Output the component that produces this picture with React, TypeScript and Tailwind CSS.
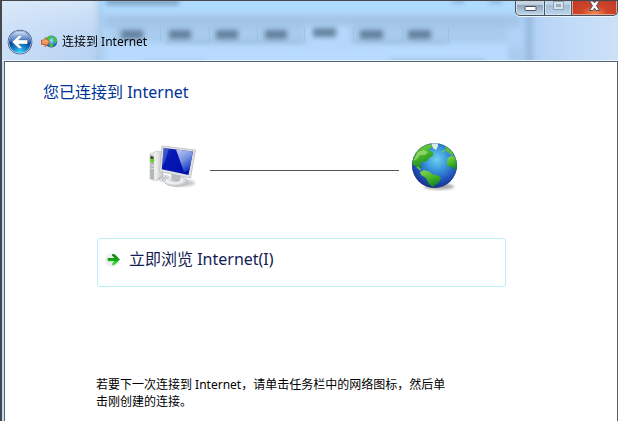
import type { ReactNode } from "react";

const backdropTabs = [
  { x: 121, width: 22 },
  { x: 169, width: 22 },
  { x: 216, width: 22 },
  { x: 265, width: 22 },
  { x: 313, width: 23 },
  { x: 360, width: 23 },
  { x: 408, width: 23 },
];

const tabDividers = [160, 209, 257, 304, 353, 402, 448];

function GlassBackdrop() {
  return (
    <svg className="absolute -left-0.5 top-0 h-[61px] w-[calc(100%+2px)]" aria-hidden="true">
      <defs>
        <linearGradient id="glass-left" x1="0" x2="1">
          <stop offset="0" stopColor="#d3e3f7" />
          <stop offset="0.5" stopColor="#c3d9f4" />
          <stop offset="1" stopColor="#b2d1f3" />
        </linearGradient>
        <linearGradient id="glass-shine" x1="0" x2="0" y1="0" y2="1">
          <stop offset="0" stopColor="#dcebfa" stopOpacity="0.8" />
          <stop offset="1" stopColor="#b9d4f5" stopOpacity="0.3" />
        </linearGradient>
        <linearGradient id="glass-right" gradientUnits="userSpaceOnUse" x1="528" x2="618" y1="0" y2="0">
          <stop offset="0" stopColor="#b1d1f4" />
          <stop offset="0.5" stopColor="#c1dbf7" />
          <stop offset="1" stopColor="#cde1f7" />
        </linearGradient>
        <filter id="haze" x="-20%" y="-50%" width="140%" height="200%">
          <feGaussianBlur stdDeviation="3" />
        </filter>
        <filter id="soft" x="-30%" y="-50%" width="160%" height="200%">
          <feGaussianBlur stdDeviation="2.4" />
        </filter>
      </defs>
      <rect width="100" height="61" fill="url(#glass-left)" />
      <rect width="100" height="61" fill="url(#glass-shine)" />
      <rect x="528" width="100%" height="61" fill="url(#glass-right)" />
      <rect x="99" width="430" height="61" fill="#b1d4f7" />
      <g filter="url(#haze)">
        <rect x="100" y="-8" width="426" height="20" fill="#afdbff" />
        <rect x="104" y="14" width="416" height="12" fill="#a2c4e6" />
        <rect x="112" y="26" width="396" height="15" fill="#a9cbed" />
        <rect x="108" y="44" width="400" height="20" fill="#b8dbff" />
        <rect x="306" y="25" width="44" height="25" fill="#b5d8fc" />
        <rect x="526" y="-6" width="6" height="75" fill="#91b4d9" />
        <rect x="97" y="-6" width="3" height="75" fill="#a0bddc" opacity="0.8" />
        <rect x="508" y="46" width="14" height="20" fill="#a9caec" />
      </g>
      <g filter="url(#soft)">
        <rect x="106" y="-2" width="73" height="6" fill="#7192b3" opacity="0.8" />
        <rect x="452" y="-2" width="12" height="4" fill="#6d8dac" opacity="0.6" />
        <rect x="489" y="-2" width="13" height="4" fill="#6d8dac" opacity="0.6" />
        {backdropTabs.map((tab) => (
          <rect
            key={tab.x}
            x={tab.x}
            y={tab.x === 313 ? 27 : 29}
            width={tab.width}
            height="9"
            fill="#48657f"
            opacity="0.72"
          />
        ))}
        <rect x="165" y="40" width="140" height="2" fill="#7f9dbc" opacity="0.6" />
        <rect x="354" y="40" width="94" height="2" fill="#7f9dbc" opacity="0.6" />
        <rect x="391" y="59" width="94" height="3" fill="#59738d" opacity="0.5" />
        <rect x="145" y="60" width="58" height="2" fill="#59738d" opacity="0.4" />
      </g>
      {tabDividers.map((x) => (
        <rect key={x} x={x} y="26" width="1" height="15" fill="#819fbc" opacity="0.25" />
      ))}
    </svg>
  );
}

function BackIcon() {
  return (
    <svg viewBox="0 0 26 26" className="size-[26px]" aria-hidden="true">
      <defs>
        <linearGradient id="back-top" x1="0" x2="0" y1="0" y2="1">
          <stop offset="0" stopColor="#dbe6f6" />
          <stop offset="0.4" stopColor="#86aadd" />
          <stop offset="1" stopColor="#2f62b2" />
        </linearGradient>
        <radialGradient id="back-bottom" cx="0.5" cy="1" r="0.75">
          <stop offset="0" stopColor="#35e3ff" />
          <stop offset="0.4" stopColor="#168bd4" />
          <stop offset="1" stopColor="#052b76" />
        </radialGradient>
      </defs>
      <circle cx="13" cy="13" r="12.3" fill="#3a5486" />
      <circle cx="13" cy="13" r="11.5" fill="#cfdef4" />
      <circle cx="13" cy="13" r="10.8" fill="url(#back-bottom)" />
      <path d="M2.2 13C2.2 6.8 7 2.2 13 2.2S23.8 6.8 23.8 13Q19 14.5 13 13.5T2.2 13Z" fill="url(#back-top)" />
      <path
        d="M5 13 L12 6.4 Q14.5 6 14.8 7.4 L11.7 10.9 H19.7 Q20.5 10.9 20.5 11.8 V14.2 Q20.5 15.1 19.7 15.1 H11.7 L14.8 18.6 Q14.5 20 12 19.6Z"
        fill="#fff"
        stroke="#45658d"
        strokeWidth="0.4"
      />
    </svg>
  );
}

function ConnectIcon() {
  return (
    <svg viewBox="0 0 17 14" className="h-[14px] w-[17px]" aria-hidden="true">
      <defs>
        <radialGradient id="mini-globe" cx="0.5" cy="0.4" r="0.6">
          <stop offset="0" stopColor="#9de3ff" />
          <stop offset="0.55" stopColor="#3292de" />
          <stop offset="1" stopColor="#174599" />
        </radialGradient>
      </defs>
      <circle cx="10.3" cy="6.5" r="6" fill="url(#mini-globe)" />
      <path d="M5 4.2 Q7 .6 10.3 .6 L10.8 3 8.6 4.5 8 7 5 6Z M12.3 1 Q15.8 2.8 16.2 6.5 L14.2 8.6 12.6 5.5Z M9 8.6 L12 9.2 12.6 10.6 10.5 12.4 8.6 11.6Z" fill="#4cc234" />
      <path d="M0.5 5 H4 V2.6 L8.9 7.2 4 11.8 V9.4 H0.5Z" fill="#f79150" stroke="#b9501f" strokeWidth="0.8" />
      <path d="M1.4 6 H4.8 V4.9 L7 7" fill="none" stroke="#ffc398" strokeWidth="0.7" />
    </svg>
  );
}

function ComputerIcon() {
  return (
    <svg viewBox="0 0 50 44" className="h-11 w-[50px]" aria-hidden="true">
      <defs>
        <linearGradient id="screen" x1="0" x2="1" y1="0" y2="0.5">
          <stop offset="0" stopColor="#1b3cc0" />
          <stop offset="0.35" stopColor="#0416b4" />
          <stop offset="1" stopColor="#0210a8" />
        </linearGradient>
        <linearGradient id="screen-shine" x1="0" x2="0.5" y1="0" y2="1">
          <stop offset="0" stopColor="#eaf4ff" />
          <stop offset="0.55" stopColor="#8eaeed" />
          <stop offset="1" stopColor="#1c43cb" />
        </linearGradient>
        <linearGradient id="tower" x1="0" x2="1">
          <stop offset="0" stopColor="#c9cccd" />
          <stop offset="0.4" stopColor="#f0f1f1" />
          <stop offset="1" stopColor="#c4c7c9" />
        </linearGradient>
        <radialGradient id="stand" cx="0.4" cy="0.35" r="0.65">
          <stop offset="0" stopColor="#c4c7c9" />
          <stop offset="0.5" stopColor="#f4f5f5" />
          <stop offset="1" stopColor="#bcbec0" />
        </radialGradient>
        <filter id="pc-shadow">
          <feGaussianBlur stdDeviation="1.2" />
        </filter>
      </defs>
      <ellipse cx="34" cy="38" rx="12" ry="3.5" fill="#777" opacity="0.4" filter="url(#pc-shadow)" />
      <path d="M1 9 L8 6 14 7 V32 L7 36 1 34Z" fill="url(#tower)" stroke="#c3c5c7" strokeWidth="0.6" />
      <path d="M1.2 10 L5 11 V35 L1.2 33.5Z" fill="#b3b7b8" />
      <path d="M1.5 11 L4.5 12 V15 L1.5 14Z" fill="#2d372a" />
      <circle cx="3.4" cy="15.5" r="1.9" fill="#5fd813" />
      <path d="M1.5 20 L5 21 M1.5 23 L5 24" stroke="#e2e5e6" strokeWidth="1" />
      <path d="M8 34 L14 30 20 31 14 37Z" fill="#e0e2e3" stroke="#b2b5b7" strokeWidth="0.5" />
      <path d="M10 34 L14 31.5 M13 35 L17 31.5 M16 35 L19 33" stroke="#868686" strokeWidth="0.7" />
      <ellipse cx="27" cy="36.5" rx="11.5" ry="5" fill="url(#stand)" stroke="#b0b3b4" strokeWidth="0.6" />
      <path d="M22 28 L32 30 31 36 Q27 38 23 35Z" fill="#b9bcbe" />
      <path d="M13 1 L46.5 5 41.5 33 10.5 26.5Z" fill="#e0e1e2" stroke="#b4b6b8" strokeWidth="0.7" />
      <path d="M14.6 3 L44 6.5 39.5 30 12.8 24.3Z" fill="url(#screen)" />
      <path d="M27 4.5 L43.8 6.5 40.5 25 35 27Z" fill="url(#screen-shine)" opacity="0.82" />
      <path d="M14.6 3 L20 3.7 15 18 13.3 20Z" fill="#688bd5" opacity="0.45" />
    </svg>
  );
}

function GlobeIcon() {
  return (
    <svg viewBox="0 0 48 50" className="h-[50px] w-12" aria-hidden="true">
      <defs>
        <radialGradient id="ocean" cx="0.55" cy="0.36" r="0.65">
          <stop offset="0" stopColor="#6fd0f0" />
          <stop offset="0.38" stopColor="#3a97da" />
          <stop offset="0.75" stopColor="#1f51bb" />
          <stop offset="1" stopColor="#17307f" />
        </radialGradient>
        <linearGradient id="land" x1="0" x2="0.4" y1="0" y2="1">
          <stop offset="0" stopColor="#8fd45c" />
          <stop offset="0.5" stopColor="#4dbb27" />
          <stop offset="1" stopColor="#178a22" />
        </linearGradient>
        <clipPath id="globe-edge">
          <circle cx="23.5" cy="23.5" r="22.5" />
        </clipPath>
        <filter id="globe-shadow">
          <feGaussianBlur stdDeviation="1.4" />
        </filter>
      </defs>
      <ellipse cx="28" cy="44.5" rx="15" ry="3" fill="#454545" opacity="0.5" filter="url(#globe-shadow)" />
      <circle cx="23.5" cy="23.5" r="22.5" fill="url(#ocean)" />
      <g clipPath="url(#globe-edge)">
        <path
          d="M3 11 Q9 3 17 2 L22 3 20 6 17 8 22 10 22 14 18 16 16 19 12 20 9 22 11 25 7 27 5 24 2 23 0 19Z"
          fill="url(#land)"
        />
        <path d="M20 1 L27 1 27 4 25 8 22 6Z" fill="#e0eee0" />
        <path d="M34 4 L38 5 43 11 41 14 38 11 35 9Z" fill="#5ec03c" />
        <path d="M36 17 L40 14 47 15 48 27 44 28 41 25 36 24Z" fill="url(#land)" />
        <path d="M9 30 L13 28 19 30 21 32 28 34 30 36 28 40 22 45 18 42 15 36 10 33Z" fill="url(#land)" />
        <path d="M7 10 L13 8 17 10 14 13 9 13 6 17 2 19Z" fill="#b9e08d" opacity="0.6" />
        <path d="M6 25 L10 28 M34 8 L31 10" stroke="#7ccc48" strokeWidth="1.4" fill="none" />
      </g>
      <circle cx="23.5" cy="23.5" r="22" fill="none" stroke="#18397d" strokeWidth="0.7" opacity="0.4" />
    </svg>
  );
}

function ArrowIcon() {
  return (
    <svg viewBox="0 0 16 16" className="size-4 shrink-0" aria-hidden="true">
      <defs>
        <linearGradient id="go" x1="0" x2="0" y1="0" y2="1">
          <stop offset="0" stopColor="#087707" />
          <stop offset="0.5" stopColor="#14a814" />
          <stop offset="1" stopColor="#39ed45" />
        </linearGradient>
      </defs>
      <circle cx="7" cy="9" r="7" fill="#efedf0" />
      <path
        d="M3 7 H9.5 L7 4.5 Q6.8 2.9 8.2 2.9 Q9.2 2.9 10 3.7 L15 8.6 10 13.5 Q9.2 14.3 8.2 14.3 Q6.8 14.3 7 12.7 L9.5 10.2 H3 Q2 8.6 3 7Z"
        fill="url(#go)"
      />
    </svg>
  );
}

type CaptionButtonProps = { label: string; className: string; children: ReactNode };

function CaptionButton({ label, className, children }: CaptionButtonProps) {
  return (
    <button type="button" aria-label={label} className={`flex h-full justify-center ${className}`}>
      {children}
    </button>
  );
}

function CaptionButtons() {
  return (
    <div className="absolute right-0 top-0 flex h-[15px] w-[103px] overflow-hidden rounded-b-[5px] border-x border-b border-[#46535f] bg-[#46535f] shadow-[0_1px_0_#ecf6ff]">
      <CaptionButton
        label="最小化"
        className="w-[28px] border-x border-b border-[#d2e1ee] bg-linear-to-b from-[#c3d3e2] from-25% via-[#8fa5ba] via-35% to-[#bcd2e7]"
      >
        <svg viewBox="0 0 13 13" className="h-[13px] w-[13px]">
          <rect x="1" y="5.5" width="11" height="4" rx="1" fill="#fff" stroke="#48505f" />
        </svg>
      </CaptionButton>
      <CaptionButton
        label="最大化"
        className="ml-px w-[26px] border-x border-b border-[#d3e4f3] bg-linear-to-b from-[#bfd4e8] from-25% via-[#a2bdd6] via-35% to-[#bad3eb]"
      >
        <svg viewBox="0 0 13 13" className="h-[13px] w-[13px]">
          <path d="M1.5 0.5 H11.5 V8.5 H1.5Z M4.5 3.5 V5.5 H8.5 V3.5Z" fill="#d6e1ec" fillRule="evenodd" stroke="#8ba0b3" />
        </svg>
      </CaptionButton>
      <CaptionButton
        label="关闭"
        className="ml-px flex-1 border-x border-b border-[#e9a18d] bg-[radial-gradient(ellipse_at_bottom,#f38c55_0%,#cd4529_45%,#c0392a_100%)]"
      >
        <svg viewBox="0 0 13 13" className="h-[13px] w-[13px]">
          <path
            d="M1.5 0 H5 L6.5 2 8 0 H11.5 L8.5 4.7 11.5 9.5 H8 L6.5 7.2 5 9.5 H1.5 L4.5 4.7Z"
            fill="#fff"
            stroke="#58505c"
            strokeWidth="1"
          />
        </svg>
      </CaptionButton>
    </div>
  );
}

export default function App() {
  return (
    <div
      lang="zh-CN"
      className="flex min-h-screen flex-col border-l-2 border-t border-[#46474b] bg-[#c3dcf8] font-['Noto_Sans','Noto_Sans_CJK_SC',sans-serif] text-black"
    >
      <header className="relative h-[60px] shrink-0 overflow-hidden border-b border-[#e8f4ff]">
        <GlassBackdrop />
        <div className="relative flex items-center gap-2 pl-[5px] pt-7">
          <button type="button" aria-label="返回">
            <BackIcon />
          </button>
          <div className="flex items-center gap-1">
            <ConnectIcon />
            <h1 className="text-xs leading-4">连接到 Internet</h1>
          </div>
        </div>
        <CaptionButtons />
      </header>

      <main className="ml-[2px] flex-1 border-l border-r border-t border-[#566373] bg-white">
        <h2 className="pl-[38px] pt-[18px] text-base leading-6 text-[#003399]">您已连接到 Internet</h2>

        <div className="ml-36 mr-[158px] mt-[38px] flex items-center">
          <ComputerIcon />
          <div className="ml-[11px] mr-3 mt-[7px] h-px flex-1 bg-[#555]" />
          <GlobeIcon />
        </div>

        <div className="ml-[92px] mr-[111px] mt-[46px]">
          <button
            type="button"
            className="flex h-[49px] w-full items-start gap-2 rounded-[3px] border border-[#bceefa] px-[7px] pt-2 text-left text-base leading-6 text-[#151c55]"
          >
            <span className="flex h-6 items-center">
              <ArrowIcon />
            </span>
            立即浏览 Internet(I)
          </button>
        </div>

        <p className="ml-[91px] mt-[89px] max-w-[356px] text-xs leading-[17px]">
          若要下一次连接到 Internet，请单击任务栏中的网络图标，然后单击刚创建的连接。
        </p>
      </main>
    </div>
  );
}
